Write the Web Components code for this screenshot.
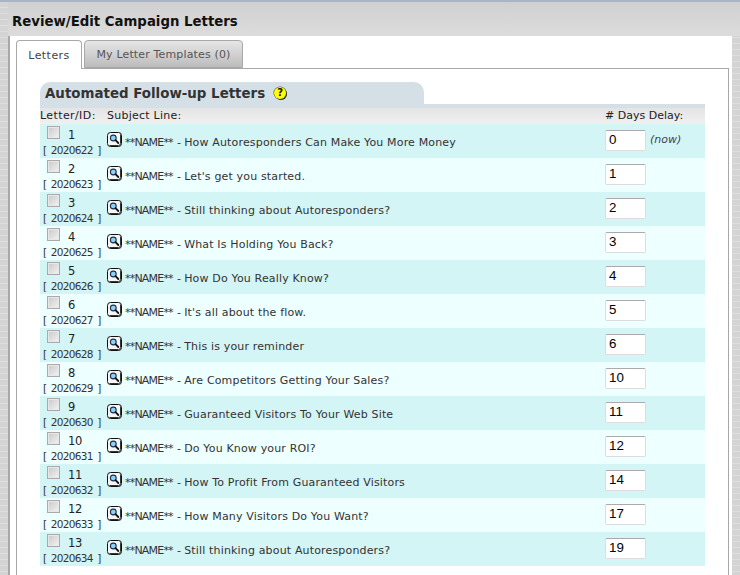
<!DOCTYPE html>
<html><head><meta charset="utf-8"><style>
html,body{margin:0;padding:0;background:#fff;height:575px;overflow:hidden}
body{font-family:"DejaVu Sans",sans-serif;}
</style></head><body>
<app-page>
<tab-panel>
<letters-head title-text="Automated Follow-up Letters"></letters-head>
<letter-row n="1" lid="2020622" days="0" now subject="How Autoresponders Can Make You More Money"></letter-row>
<letter-row n="2" lid="2020623" days="1" subject="Let's get you started."></letter-row>
<letter-row n="3" lid="2020624" days="2" subject="Still thinking about Autoresponders?"></letter-row>
<letter-row n="4" lid="2020625" days="3" subject="What Is Holding You Back?"></letter-row>
<letter-row n="5" lid="2020626" days="4" subject="How Do You Really Know?"></letter-row>
<letter-row n="6" lid="2020627" days="5" subject="It's all about the flow."></letter-row>
<letter-row n="7" lid="2020628" days="6" subject="This is your reminder"></letter-row>
<letter-row n="8" lid="2020629" days="10" subject="Are Competitors Getting Your Sales?"></letter-row>
<letter-row n="9" lid="2020630" days="11" subject="Guaranteed Visitors To Your Web Site"></letter-row>
<letter-row n="10" lid="2020631" days="12" subject="Do You Know your ROI?"></letter-row>
<letter-row n="11" lid="2020632" days="14" subject="How To Profit From Guaranteed Visitors"></letter-row>
<letter-row n="12" lid="2020633" days="17" subject="How Many Visitors Do You Want?"></letter-row>
<letter-row n="13" lid="2020634" days="19" subject="Still thinking about Autoresponders?"></letter-row>
</tab-panel>
</app-page>
<script>
class AppPage extends HTMLElement{constructor(){super();this.attachShadow({mode:'open'}).innerHTML=`<style>
:host{display:flex;width:740px;height:575px;box-sizing:border-box;overflow:hidden;border-top:2px solid #a9b4c4;
 background:repeating-linear-gradient(180deg,#d4d4d4 0,#d4d4d4 5px,#dedede 5px,#dedede 6px)}
.edge{width:8px;flex:none}
.main{flex:1;display:flex;flex-direction:column;min-width:0;margin:0 8px 0 0}
.hd{height:34px;flex:none;background:linear-gradient(#d0d0d0,#dcdcdc);box-sizing:border-box;padding:11px 0 0 4px;margin:0 -8px 0 0;
 font-size:13.3px;font-weight:bold;line-height:18px;color:#111}
.body{flex:1;background:#fff;border-left:2px solid #a8a8a8;display:flex;flex-direction:column;padding:4px 3px 0 6px;box-sizing:border-box;min-height:0}
.tabs{display:flex;gap:2px;height:28px;flex:none;font-size:11px;letter-spacing:.15px}
.tab{box-sizing:border-box;border:1px solid #a8a8a8;border-radius:4px 4px 0 0;display:flex;align-items:center;justify-content:center;color:#555}
.t1{width:66px;background:#fff;border-bottom:none;height:29px;position:relative;z-index:1;color:#444;letter-spacing:.45px}
.t2{width:159px;background:linear-gradient(#e6e6e6,#bcbcbc);color:#555;padding-top:1px}
</style><div class="edge"></div><div class="main"><div class="hd">Review/Edit Campaign Letters</div>
<div class="body"><div class="tabs"><div class="tab t1">Letters</div><div class="tab t2">My Letter Templates (0)</div></div><slot></slot></div></div>`}}
customElements.define('app-page',AppPage);
class TabPanel extends HTMLElement{constructor(){super();this.attachShadow({mode:'open'}).innerHTML=`<style>
:host{display:block;flex:1;border:1px solid #a8a8a8;border-bottom:none;padding:13px 23px 0 23px;box-sizing:border-box;background:#fff;min-height:0}
</style><slot></slot>`}}
customElements.define('tab-panel',TabPanel);
class LettersHead extends HTMLElement{constructor(){super();this.attachShadow({mode:'open'}).innerHTML=`<style>
:host{display:block;color:#333}
.bar{display:flex;height:22px;background:#fff}
.t{width:384px;background:#d4e0e6;border-radius:10px 10px 0 0;box-sizing:border-box;padding:3px 0 0 5px;font-size:13.4px;font-weight:bold;line-height:18px;color:#333;display:flex;gap:9px;white-space:nowrap;position:relative}
.q{width:12px;height:12px;border-radius:50%;background:#ff0;box-shadow:0 0 0 .5px #444,1px 1px 0 #222;font-size:10px;line-height:12px;text-align:center;font-weight:bold;color:#111;margin-top:2px}
.rest{height:22px;flex:1}
.line{height:4px;background:#d4e0e6}
.cols{display:flex;height:16px;background:linear-gradient(#e4e4e4,#f0f0f0);font-size:11px;line-height:16px;color:#222}
.a{width:67px;flex:none;letter-spacing:.4px}.b{width:498px;flex:none;letter-spacing:.25px}
</style><div class="bar"><div class="t"><span id="tt"></span><span class="q">?</span></div><div class="rest"></div></div><div class="line"></div>
<div class="cols"><div class="a">Letter/ID:</div><div class="b">Subject Line:</div><div># Days Delay:</div></div>`;
}connectedCallback(){this.shadowRoot.getElementById('tt').textContent=this.getAttribute('title-text')}}
customElements.define('letters-head',LettersHead);
class LetterRow extends HTMLElement{constructor(){super();this.attachShadow({mode:'open'}).innerHTML=`<style>
:host{display:flex;height:34px;font-size:11px;color:#333;background:#d4f5f5}
:host(.odd){background:#eeffff}
.id{width:67px;flex:none;line-height:15px;box-sizing:border-box;padding-top:2px}
.top{display:flex;align-items:flex-start;height:17px;gap:8px;font-size:11.5px;color:#222;padding-left:7px}
.cb{width:13px;height:13px;box-sizing:border-box;border:1px solid #aaa;background:linear-gradient(135deg,#c8c8c8,#f4f4f4);box-shadow:inset 0 0 0 1px #e8e8e8;flex:none}
.num{line-height:16px;margin-top:1px;letter-spacing:-.2px}
.lid{padding-left:3px;font-size:10.5px;letter-spacing:-.7px;word-spacing:1.8px;white-space:nowrap}
.sub{width:498px;flex:none;display:flex;align-items:flex-start;padding-top:8px;box-sizing:border-box;gap:3px;white-space:nowrap}
.sub svg{flex:none}
.st{margin-top:4px;line-height:14px;letter-spacing:.16px;white-space:pre}
.pre{letter-spacing:-.8px;word-spacing:1.4px}
.day{display:flex;align-items:flex-start;gap:4px;padding-top:6px}
.inp{width:41px;height:21px;box-sizing:border-box;border:1px solid #ddd;border-top-color:#aaa;border-radius:2px;background:#fff;font:13.33px "Liberation Sans",sans-serif;color:#000;padding:1px 3px;line-height:16px}
.now{font-style:italic;color:#445;line-height:20px}
</style><div class="id"><div class="top"><span class="cb"></span><span class="num" id="n"></span></div><div class="lid" id="lid"></div></div>
<div class="sub"><svg width="15" height="15" viewBox="0 0 15 15"><rect x=".5" y=".5" width="14" height="14" rx="3" fill="#f6f6f6" stroke="#111"/><path d="M13.5 2.5v9a2 2 0 0 1-2 2h-9" fill="none" stroke="#333" stroke-width="1"/><circle cx="6.3" cy="6" r="2.9" fill="#8ed2f7" stroke="#1f3350" stroke-width="1.1"/><path d="M8.5 8.2l2.8 2.8" stroke="#111" stroke-width="1.8" stroke-linecap="round"/></svg><span class="st"><span class="pre">**NAME** - </span><span id="s"></span></span></div>
<div class="day"><div class="inp" id="d"></div><span class="now" id="w"></span></div>`;
}connectedCallback(){const r=this.shadowRoot,g=k=>this.getAttribute(k);
r.getElementById('n').textContent=g('n');r.getElementById('lid').textContent='[ '+g('lid')+' ]';r.getElementById('s').textContent=g('subject');r.getElementById('d').textContent=g('days');
if(this.hasAttribute('now'))r.getElementById('w').textContent='(now)';if(+g('n')%2==0)this.classList.add('odd')}}
customElements.define('letter-row',LetterRow);
</script></body></html>
